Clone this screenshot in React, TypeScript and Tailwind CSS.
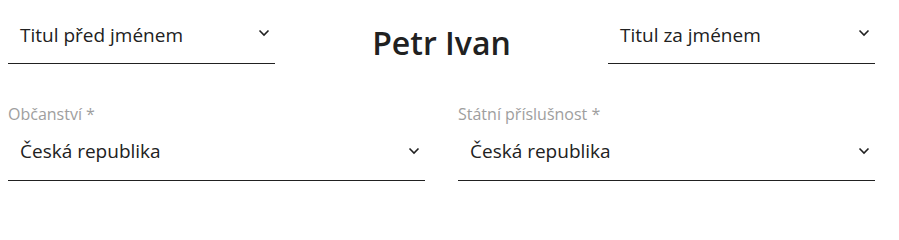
import React from "react";

function Chevron({ className = "" }: { className?: string }) {
  return (
    <svg width="12" height="8" viewBox="0 0 12 8" className={"shrink-0 " + className}>
      <polyline points="1.5,1.5 6,6 10.5,1.5" fill="none" stroke="#212121" strokeWidth="1.6" />
    </svg>
  );
}

function TopSelect({ value }: { value: string }) {
  return (
    <div className="flex items-start justify-between border-b border-[#212121] pl-3 pr-[5px] h-[43px]">
      <span className="text-[19px] leading-[28px] text-[#212121]">{value}</span>
      <Chevron className="mt-[8px]" />
    </div>
  );
}

function Select({ value }: { value: string }) {
  return (
    <div className="flex items-center justify-between border-b border-[#212121] pl-3 pr-[5px] h-[57px] pb-[2px]">
      <span className="text-[19px] leading-[28px] text-[#212121]">{value}</span>
      <Chevron />
    </div>
  );
}

export default function App() {
  return (
    <div className="w-[899px] h-[229px] bg-white pl-2 pr-6" style={{ fontFamily: '"Open Sans", sans-serif' }}>
      <div className="grid grid-cols-[267px_1fr_267px] items-start pt-[21px]">
        <TopSelect value="Titul před jménem" />
        <div className="text-center text-[32px] font-semibold text-[#212121] leading-[44px]">Petr Ivan</div>
        <TopSelect value="Titul za jménem" />
      </div>
      <div className="grid grid-cols-2 gap-[33px] mt-[39px]">
        <div className="flex flex-col">
          <label className="text-[16px] leading-[20px] text-[#9e9e9e]">Občanství *</label>
          <Select value="Česká republika" />
        </div>
        <div className="flex flex-col">
          <label className="text-[16px] leading-[20px] text-[#9e9e9e]">Státní příslušnost *</label>
          <Select value="Česká republika" />
        </div>
      </div>
    </div>
  );
}
